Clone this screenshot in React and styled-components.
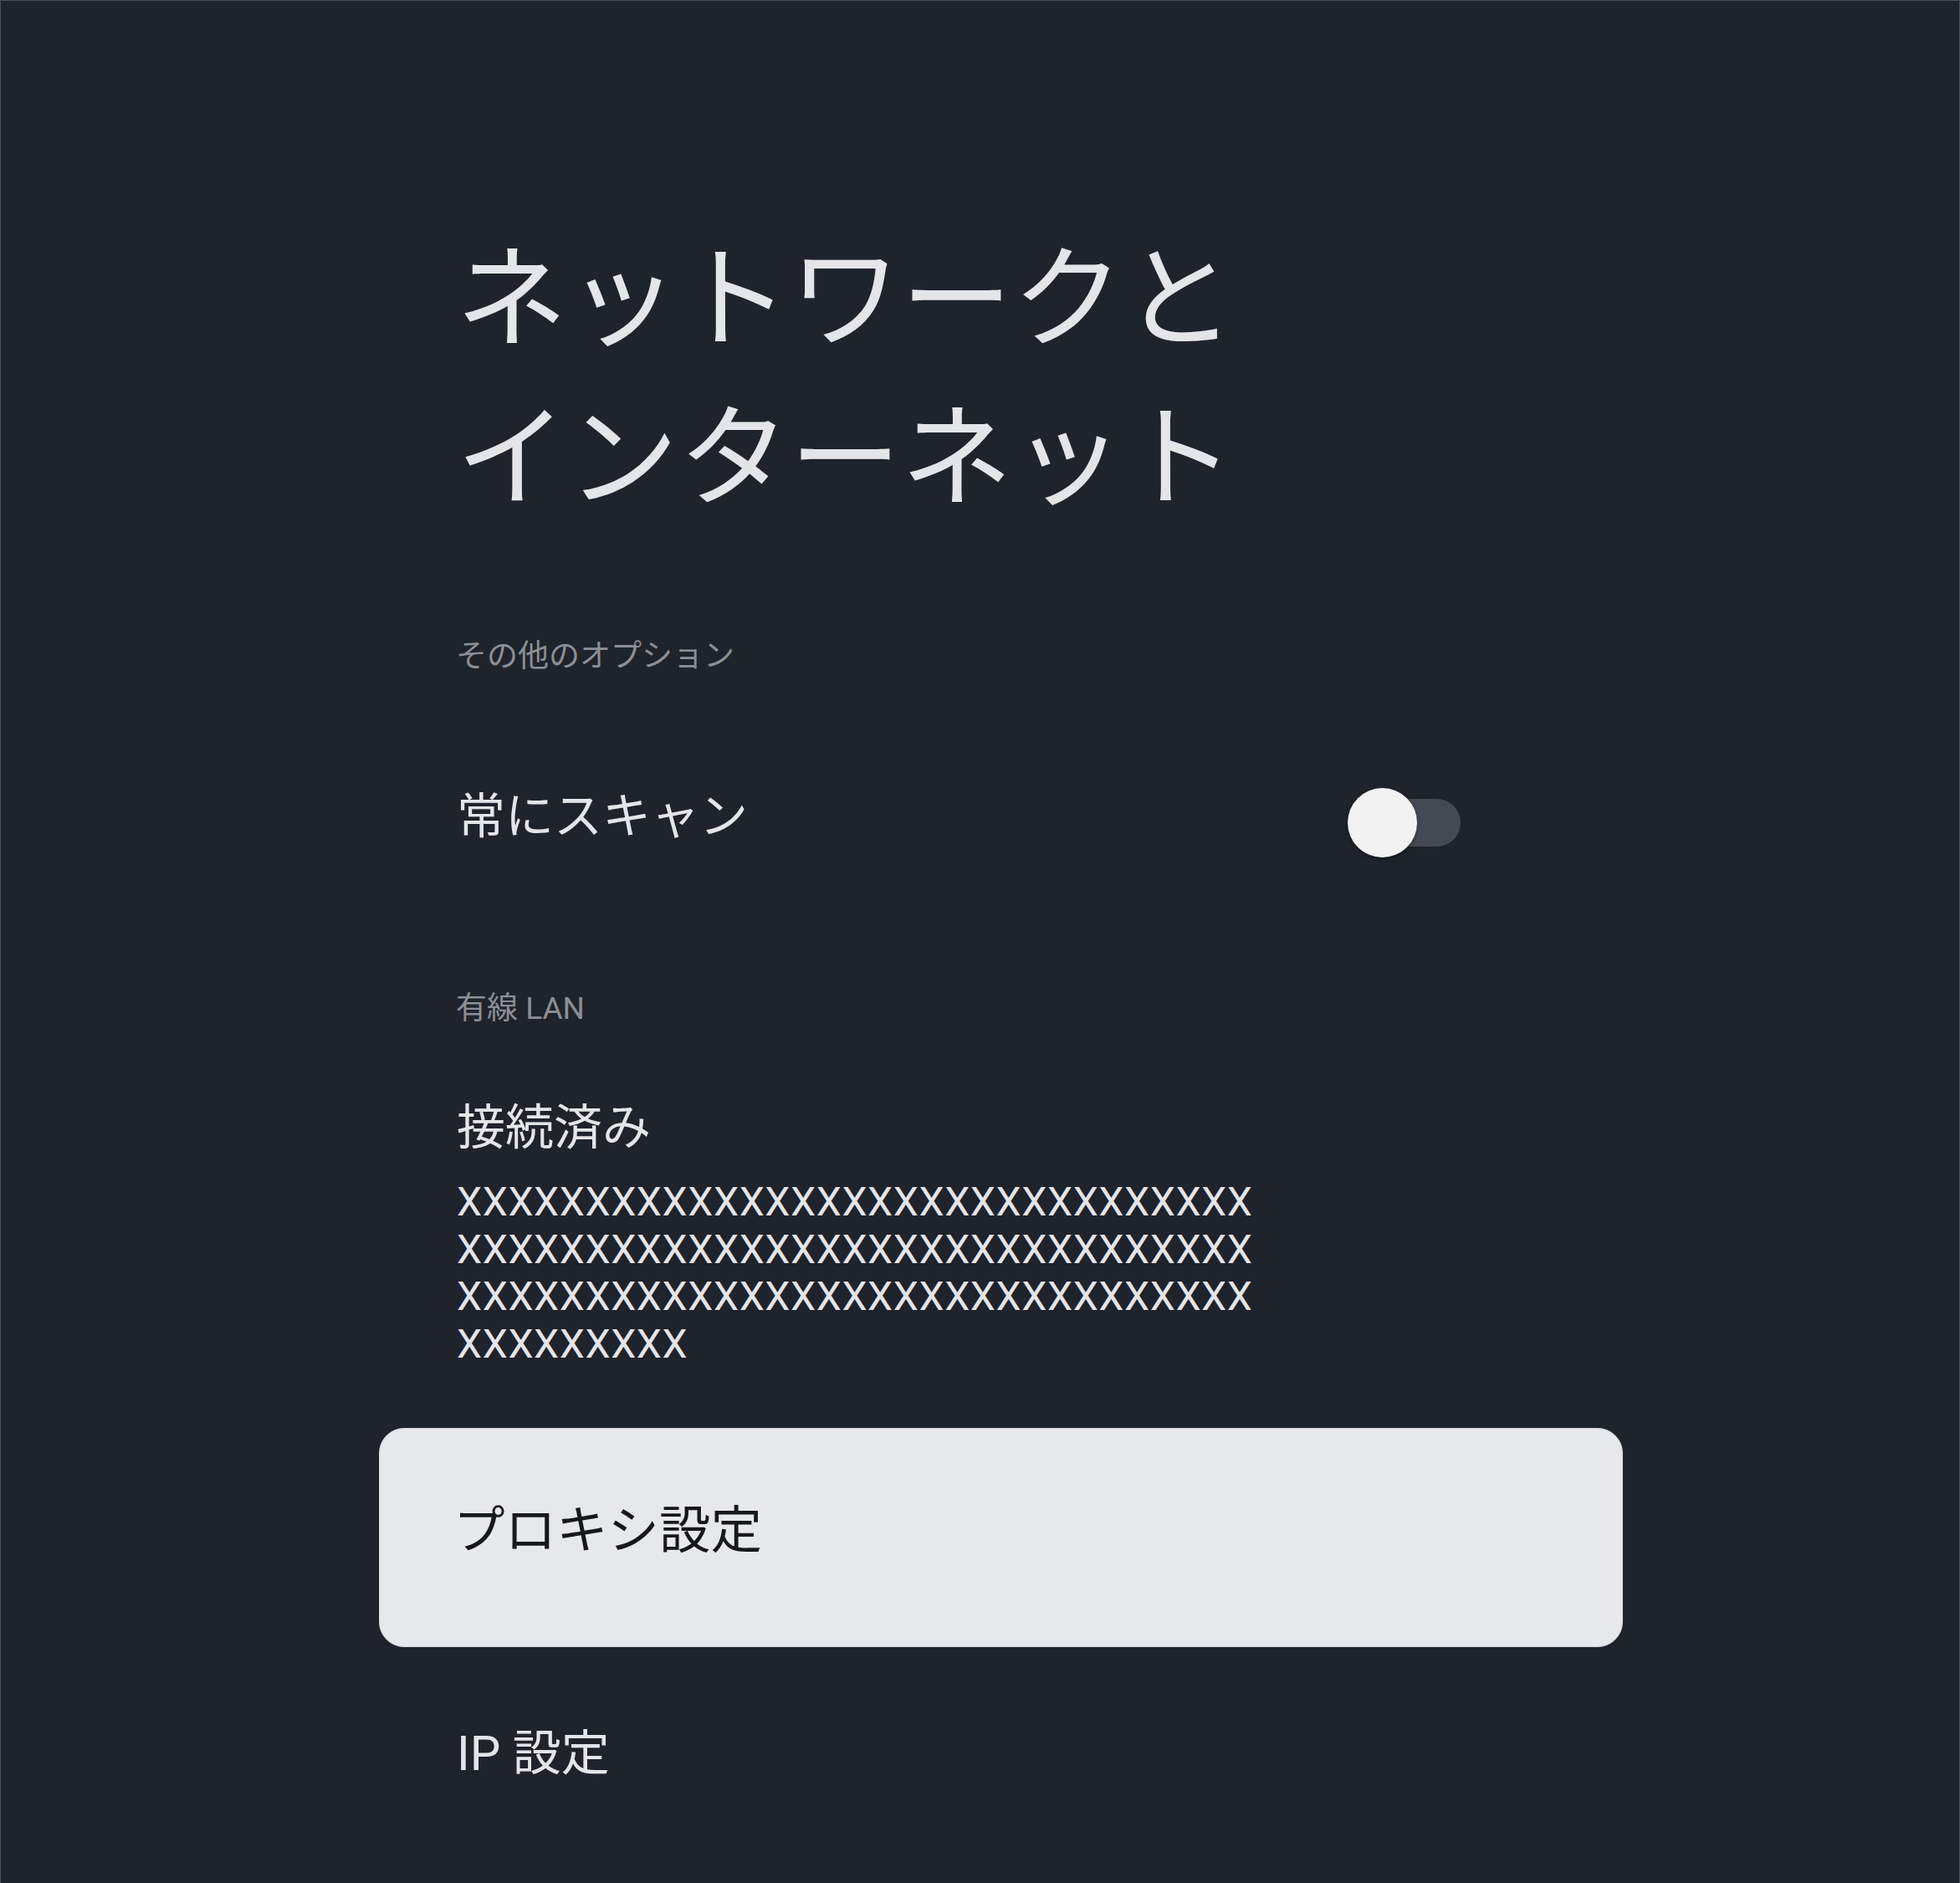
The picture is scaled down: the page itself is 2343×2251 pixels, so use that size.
import React from "react";
import styled, { createGlobalStyle } from "styled-components";

const Global = createGlobalStyle`
  html, body {
    margin: 0;
    padding: 0;
    background: #1f232b;
  }
  body {
    font-family: Roboto, "Noto Sans CJK JP", sans-serif;
  }
`;

const Page = styled.div`
  box-sizing: border-box;
  min-height: 100vh;
  background: #1f232b;
  border: 1px solid #4a4e57;
  border-bottom: none;
  padding: 263px 0 120px 452px;
  font-family: Roboto, "Noto Sans CJK JP", sans-serif;
`;

const Column = styled.div`
  width: 1487px;
  display: flex;
  flex-direction: column;
`;

const Title = styled.h1`
  margin: 0 0 116px;
  padding-left: 92px;
  font-size: 133px;
  line-height: 190px;
  font-weight: 400;
  color: #e4e5e9;
  letter-spacing: 0;
`;

const SectionHeader = styled.div`
  padding-left: 92px;
  font-size: 37px;
  line-height: 50px;
  color: #8b8f97;
  margin-top: ${(p) => p.$top || 0}px;
`;

const Row = styled.div`
  box-sizing: border-box;
  display: flex;
  align-items: flex-start;
  justify-content: space-between;
  padding: ${(p) => p.$pt || 0}px ${(p) => p.$pr || 92}px ${(p) => p.$pb || 0}px
    ${(p) => p.$pl || 92}px;
  margin-top: ${(p) => p.$top || 0}px;
  border-radius: 30px;
  background: ${(p) => (p.$focused ? "#e7e8ec" : "transparent")};
  border: 1px solid ${(p) => (p.$focused ? "#d3d5da" : "transparent")};
`;

const RowText = styled.div`
  display: flex;
  flex-direction: column;
`;

const RowTitle = styled.div`
  font-size: ${(p) => (p.$dark ? 61.5 : 58)}px;
  line-height: 70px;
  color: ${(p) => (p.$dark ? "#16181c" : "#e4e5e9")};
`;

const RowSummary = styled.div`
  margin-top: 26px;
  font-size: 48px;
  letter-spacing: 0.6px;
  line-height: 56.7px;
  color: #e4e5e9;
  width: 962px;
  word-break: break-all;
`;

const Switch = styled.div`
  position: relative;
  width: 135px;
  height: 83px;
  margin-top: 1px;
  flex-shrink: 0;
`;

const Track = styled.div`
  position: absolute;
  right: 0;
  top: 13px;
  width: 107px;
  height: 57px;
  border-radius: 28.5px;
  background: #454954;
`;

const Thumb = styled.div`
  position: absolute;
  left: 0;
  top: 0;
  width: 83px;
  height: 83px;
  border-radius: 50%;
  background: #f2f2f3;
  box-shadow: 0 2px 4px rgba(0, 0, 0, 0.35);
`;

export default function App() {
  return (
    <>
      <Global />
      <Page>
        <Column>
          <Title>
            ネットワークと
            <br />
            インターネット
          </Title>

          <SectionHeader>その他のオプション</SectionHeader>
          <Row $top={130} $pr={193}>
            <RowText>
              <RowTitle>常にスキャン</RowTitle>
            </RowText>
            <Switch>
              <Track />
              <Thumb />
            </Switch>
          </Row>

          <SectionHeader $top={155}>有線 LAN</SectionHeader>
          <Row $top={81}>
            <RowText>
              <RowTitle>接続済み</RowTitle>
              <RowSummary>
                XXXXXXXXXXXXXXXXXXXXXXXXXXXXXXXXXXXXXXXXXXXXXXXXXXXXXXXXXXXXXXXXXXXXXXXXXXXXXXXXXXXXXXXXXXXXXXXXXXXXXX
              </RowSummary>
            </RowText>
          </Row>

          <Row $focused $top={70} $pt={87} $pb={103} $pl={88}>
            <RowText>
              <RowTitle $dark>プロキシ設定</RowTitle>
            </RowText>
          </Row>

          <Row $top={91}>
            <RowText>
              <RowTitle>IP 設定</RowTitle>
            </RowText>
          </Row>
        </Column>
      </Page>
    </>
  );
}
